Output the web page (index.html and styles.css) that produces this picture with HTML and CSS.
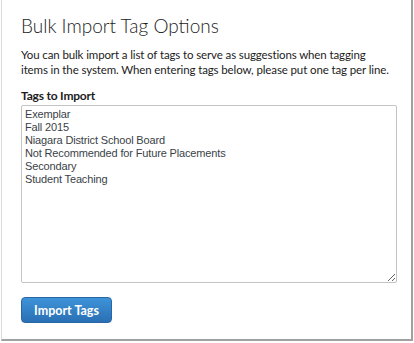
FILE: index.html
```html
<!DOCTYPE html>
<html lang="en">
<head>
  <meta charset="UTF-8" />
  <meta name="viewport" content="width=device-width, initial-scale=1.0" />
  <title>Bulk Import Tag Options</title>
  <link rel="stylesheet" href="styles.css">
</head>

<body>
  <div class="dialog">
    <h1>Bulk Import Tag Options</h1>
    <p class="intro">You can bulk import a list of tags to serve as suggestions when tagging items in the system. When entering tags below, please put one tag per line.</p>

    <label for="tags">Tags to Import</label>
    <textarea id="tags">Exemplar
Fall 2015
Niagara District School Board
Not Recommended for Future Placements
Secondary
Student Teaching</textarea>

    <button type="button">Import Tags</button>
  </div>
</body>
</html>
```

FILE: styles.css
```css
* {
  margin: 0;
  padding: 0;
  box-sizing: border-box;
}

body {
  font-family: 'Lato', sans-serif;
  color: #222;
  background-color: #fff;
  height: 343px;
  overflow: hidden;
}

.dialog {
  display: flex;
  flex-direction: column;
  align-items: flex-start;
  margin-left: 1px;
  width: 412px;
  height: 341px;
  padding: 14px 14px 0 19px;
  background-color: #fff;
  border-left: 1px solid #d9d9d9;
  border-right: 2px solid #a0a0a0;
  border-bottom: 2px solid #a0a0a0;
}

h1 {
  font-size: 19px;
  font-weight: 300;
  color: #1c1c1c;
  line-height: 24px;
  margin-bottom: 9px;
}

.intro {
  max-width: 373px;
  font-size: 11.5px;
  letter-spacing: -0.12px;
  line-height: 15px;
  color: #1c1c1c;
  margin-bottom: 12px;
}

label {
  font-size: 12px;
  font-weight: 700;
  letter-spacing: -0.2px;
  line-height: 14px;
  color: #1c1c1c;
  margin-bottom: 2px;
}

textarea {
  display: block;
  width: 376px;
  height: 178px;
  padding: 2px 3px;
  font-family: 'Liberation Sans', Arial, sans-serif;
  font-size: 11px;
  letter-spacing: -0.15px;
  line-height: 13px;
  color: #3a3f47;
  border: 1px solid #c4c4c4;
  border-radius: 2px;
  resize: vertical;
  margin-bottom: 14px;
}

button {
  width: 91px;
  height: 26px;
  font-family: 'Lato', sans-serif;
  font-size: 12.5px;
  font-weight: 700;
  color: #fff;
  background: linear-gradient(#3e93d9, #2a6fb4);
  border: 1px solid #2866a5;
  border-radius: 4px;
  cursor: pointer;
}

button:hover {
  background: #2a6fb4;
}
```
